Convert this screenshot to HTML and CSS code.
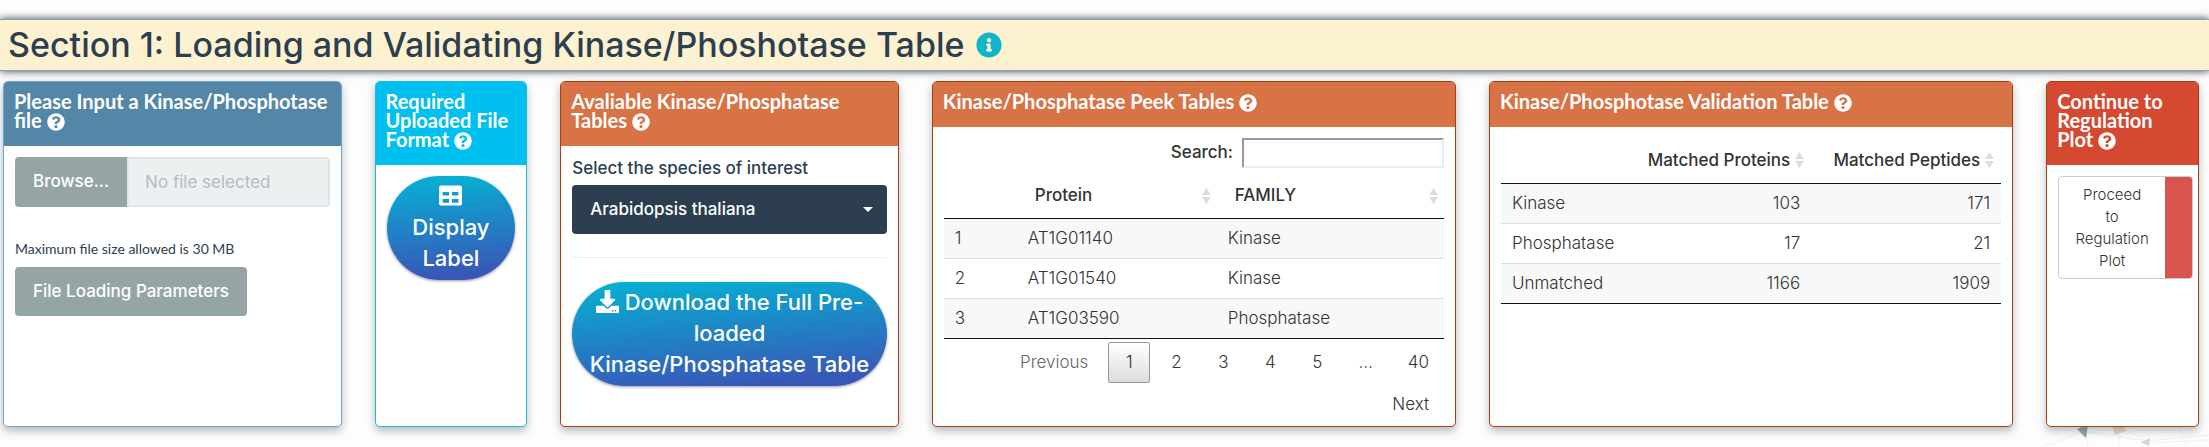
FILE: index.html
```html
<!DOCTYPE html>
<html lang="en">
<head>
<meta charset="utf-8">
<meta name="viewport" content="width=device-width, initial-scale=1">
<title>Loading and Validating</title>
<link rel="stylesheet" href="styles.css">
</head>
<body>
<svg class="defs" aria-hidden="true">
  <symbol id="question" viewBox="0 0 512 512"><path d="M504 256c0 136.997-111.043 248-248 248S8 392.997 8 256C8 119.083 119.043 8 256 8s248 111.083 248 248zM262.655 90c-54.497 0-89.255 22.957-116.549 63.758-3.536 5.286-2.353 12.415 2.715 16.258l34.699 26.31c5.205 3.947 12.621 3.008 16.665-2.122 17.864-22.658 30.113-35.797 57.303-35.797 20.429 0 45.698 13.148 45.698 32.958 0 14.976-12.363 22.667-32.534 33.976C247.128 238.528 216 254.941 216 296v4c0 6.627 5.373 12 12 12h56c6.627 0 12-5.373 12-12v-1.333c0-28.462 83.186-29.647 83.186-106.667 0-58.002-60.165-102-116.531-102zM256 338c-25.365 0-46 20.635-46 46 0 25.364 20.635 46 46 46s46-20.636 46-46c0-25.365-20.635-46-46-46z"/></symbol>
  <symbol id="info" viewBox="0 0 512 512"><path d="M256 8C119.043 8 8 119.083 8 256c0 136.997 111.043 248 248 248s248-111.003 248-248C504 119.083 392.957 8 256 8zm0 110c23.196 0 42 18.804 42 42s-18.804 42-42 42-42-18.804-42-42 18.804-42 42-42zm56 254c0 6.627-5.373 12-12 12h-88c-6.627 0-12-5.373-12-12v-24c0-6.627 5.373-12 12-12h12v-64h-12c-6.627 0-12-5.373-12-12v-24c0-6.627 5.373-12 12-12h64c6.627 0 12 5.373 12 12v100h12c6.627 0 12 5.373 12 12v24z"/></symbol>
  <symbol id="sort" viewBox="0 0 9 16"><path d="M4.500 0L9 7H0zM0 9h9l-4.500 7z"/></symbol>
</svg>

<header class="section-title">
  <h1>Section 1: Loading and Validating Kinase/Phoshotase Table</h1>
  <svg class="info-icon" role="img" aria-label="Info"><use href="#info"/></svg>
</header>

<main class="cards">
  <section class="card span-2 blue">
    <h2 class="card-head">Please Input a Kinase/Phosphotase file <svg class="help"><use href="#question"/></svg></h2>
    <div class="card-body">
      <div class="file-group">
        <button class="btn browse" type="button">Browse...</button>
        <input class="file-name" type="text" placeholder="No file selected" aria-label="Selected file" readonly>
      </div>
      <p class="note">Maximum file size allowed is 30 MB</p>
      <button class="btn params" type="button">File Loading Parameters</button>
    </div>
  </section>

  <section class="card cyan">
    <h2 class="card-head">Required Uploaded File Format <svg class="help"><use href="#question"/></svg></h2>
    <div class="card-body">
      <button class="pill" type="button"><svg class="pill-icon" viewBox="0 0 512 512"><path d="M464 32H48C21.490 32 0 53.490 0 80v352c0 26.510 21.490 48 48 48h416c26.510 0 48-21.490 48-48V80c0-26.510-21.490-48-48-48zM224 416H80v-80h144v80zm0-160H80v-80h144v80zm208 160H288v-80h144v80zm0-160H288v-80h144v80z"/></svg> Display Label</button>
    </div>
  </section>

  <section class="card span-2 orange">
    <h2 class="card-head">Avaliable Kinase/Phosphatase Tables <svg class="help"><use href="#question"/></svg></h2>
    <div class="card-body">
      <label class="field-label" for="species">Select the species of interest</label>
      <div class="select-wrap">
        <select id="species"><option>Arabidopsis thaliana</option></select>
        <svg class="caret" viewBox="0 0 10 5"><path d="M0 0h10L5 5z"/></svg>
      </div>
      <hr>
      <button class="pill" type="button"><svg class="pill-icon" viewBox="0 0 512 512"><path d="M216 0h80c13.300 0 24 10.700 24 24v168h87.700c17.800 0 26.700 21.500 14.100 34.100L269.700 378.300c-7.500 7.500-19.800 7.500-27.300 0L90.100 226.100c-12.600-12.600-3.700-34.100 14.100-34.100H192V24c0-13.300 10.700-24 24-24zm296 376v112c0 13.300-10.700 24-24 24H24c-13.300 0-24-10.700-24-24V376c0-13.300 10.700-24 24-24h146.700l49 49c20.100 20.100 52.500 20.100 72.600 0l49-49H488c13.300 0 24 10.700 24 24zm-124 88c0-11-9-20-20-20s-20 9-20 20 9 20 20 20 20-9 20-20zm64 0c0-11-9-20-20-20s-20 9-20 20 9 20 20 20 20-9 20-20z"/></svg> Download the Full Pre-loaded Kinase/Phosphatase Table</button>
    </div>
  </section>

  <section class="card span-3 orange">
    <h2 class="card-head">Kinase/Phosphatase Peek Tables <svg class="help"><use href="#question"/></svg></h2>
    <div class="card-body">
      <div class="search">
        <label for="search">Search:</label>
        <input id="search" type="search">
      </div>
      <table class="data peek">
        <colgroup><col class="c-index"><col class="c-protein"><col></colgroup>
        <thead><tr><th></th><th><span class="th">Protein <svg class="sort"><use href="#sort"/></svg></span></th><th><span class="th">FAMILY <svg class="sort"><use href="#sort"/></svg></span></th></tr></thead>
        <tbody>
          <tr><td>1</td><td>AT1G01140</td><td>Kinase</td></tr>
          <tr><td>2</td><td>AT1G01540</td><td>Kinase</td></tr>
          <tr><td>3</td><td>AT1G03590</td><td>Phosphatase</td></tr>
        </tbody>
      </table>
      <nav class="pages" aria-label="Table pages">
        <button class="page muted" type="button">Previous</button>
        <button class="page current" type="button">1</button>
        <button class="page" type="button">2</button>
        <button class="page" type="button">3</button>
        <button class="page" type="button">4</button>
        <button class="page" type="button">5</button>
        <span class="page">…</span>
        <button class="page" type="button">40</button>
        <button class="page" type="button">Next</button>
      </nav>
    </div>
  </section>

  <section class="card span-3 orange">
    <h2 class="card-head">Kinase/Phosphotase Validation Table <svg class="help"><use href="#question"/></svg></h2>
    <div class="card-body">
      <table class="data validation">
        <colgroup><col><col class="c-proteins"><col class="c-peptides"></colgroup>
        <thead><tr><th></th><th><span class="th">Matched Proteins <svg class="sort"><use href="#sort"/></svg></span></th><th><span class="th">Matched Peptides <svg class="sort"><use href="#sort"/></svg></span></th></tr></thead>
        <tbody>
          <tr><td>Kinase</td><td>103</td><td>171</td></tr>
          <tr><td>Phosphatase</td><td>17</td><td>21</td></tr>
          <tr><td>Unmatched</td><td>1166</td><td>1909</td></tr>
        </tbody>
      </table>
    </div>
  </section>

  <section class="card red">
    <h2 class="card-head">Continue to Regulation Plot <svg class="help"><use href="#question"/></svg></h2>
    <div class="card-body">
      <button class="proceed" type="button"><span class="proceed-text">Proceed<br>to<br>Regulation<br>Plot</span><span class="proceed-bar"></span></button>
    </div>
  </section>
</main>

<svg class="network" viewBox="0 0 170 22" aria-hidden="true">
  <path class="line" d="M2 22L44 7M47 8l2 14M48 7l60 9 62-6M80 8v14M86 4l24 14M140 0l8 22M110 18l60-3"/>
  <path class="teal" d="M38 4l11-4-2 13z"/>
  <path class="sand" d="M73 0h11l3 6-11 4z"/>
  <path class="grey" d="M102 17l9-4-1 8z"/>
</svg>
</body>
</html>
```

FILE: styles.css
```css
*, *::before, *::after { box-sizing: border-box; }

body {
  position: relative;
  margin: 0;
  min-height: 100vh;
  padding-top: 19px;
  overflow-x: hidden;
  background: #fdfdfd;
  color: #2c3e50;
  font-family: Inter, "Liberation Sans", sans-serif;
  font-size: 17px;
  line-height: 1.5;
}

button, input, select { font: inherit; }
button { cursor: pointer; }
svg { fill: currentColor; }
.defs { position: absolute; width: 0; height: 0; }

.section-title {
  display: flex;
  align-items: center;
  gap: 12px;
  height: 52px;
  padding: 0 8px;
  background: #fdf2d0;
  border: solid #95a0ab;
  border-width: 1px 0;
  box-shadow: 0 0 8px #2c3e50;
}
.section-title h1 { margin: 0; font-size: 34px; font-weight: 500; line-height: 40px; }
.info-icon { width: 26px; height: 26px; color: #0fb5c9; }

.cards {
  position: relative;
  z-index: 1;
  display: grid;
  grid-template-columns: repeat(12, minmax(0, 1fr));
  gap: 33px;
  padding: 10px 10px 0 3px;
}
.card {
  min-height: 346px;
  overflow: hidden;
  background: #fff;
  border: 1px solid;
  border-radius: 5px;
  box-shadow: 0 4px 8px rgba(44, 62, 80, 0.35);
}
.span-2 { grid-column: span 2; }
.span-3 { grid-column: span 3; }
.card-head {
  margin: 0;
  padding: 10px 10px 15px;
  color: #fff;
  font: 700 20px/19px Lato, sans-serif;
}
.help { width: 18px; height: 18px; vertical-align: -3px; }
.card-body { padding: 11px 11px 0; }

.blue { border-color: #6ca7cc; }
.blue .card-head { background: #5487a7; }
.cyan { border-color: #1fbbdd; }
.cyan .card-head { background: #00c0ef; }
.orange { border-color: #a8400c; }
.orange .card-head { background: #d87346; }
.red { border-color: #a8400c; }
.red .card-head { background: #d44930; }

.file-group { display: flex; }
.btn {
  height: 49px;
  padding: 0 18px;
  background: #95a5a6;
  border: 0;
  border-radius: 4px;
  color: #fff;
  font-weight: 500;
  white-space: nowrap;
}
.browse { height: 50px; border-radius: 4px 0 0 4px; }
.file-name {
  flex: 1;
  min-width: 0;
  height: 50px;
  padding: 0 16px;
  background: #ecf0f1;
  border: 2px solid #dce4ec;
  border-radius: 0 4px 4px 0;
}
.file-name::placeholder { color: #b4bcc2; opacity: 1; }
.note { margin: 31px 0 7px; font: 14px/22px Lato, sans-serif; }

.pill {
  display: block;
  width: 100%;
  padding: 5px 14px 6px;
  border: 0;
  border-radius: 52px;
  background: linear-gradient(175deg, #04b4d4, #3858b8 90%);
  box-shadow: 0 1px 3px rgba(0, 0, 0, 0.4);
  color: #fff;
  font-size: 22px;
  font-weight: 500;
  line-height: 31px;
}
.pill-icon { width: 23px; height: 23px; vertical-align: -3px; }

.field-label { display: block; margin-bottom: 5px; font-weight: 500; line-height: 23px; }
.select-wrap { display: grid; align-items: center; }
.select-wrap > * { grid-area: 1 / 1; }
.select-wrap select {
  width: 100%;
  height: 49px;
  padding: 0 18px;
  appearance: none;
  background: #2c3e50;
  border: 0;
  border-radius: 4px;
  color: #fff;
  font-weight: 500;
}
.caret { width: 10px; height: 5px; margin-right: 14px; justify-self: end; color: #fff; pointer-events: none; }
hr { height: 1px; margin: 23px 0 24px; background: #ecf0f1; border: 0; }

.search {
  display: flex;
  justify-content: flex-end;
  align-items: center;
  gap: 9px;
  color: #333;
  font-weight: 500;
}
.search input {
  width: 202px;
  height: 30px;
  background: #fff;
  border: 2px solid;
  border-color: #96999b #ededed #ededed #96999b;
  border-radius: 0;
  appearance: none;
}

.data { width: 100%; table-layout: fixed; border-collapse: collapse; border-bottom: 1px solid #111; color: #333; }
.data thead { border-bottom: 1px solid #111; }
.data th { height: 50px; padding: 6px 6px 0 18px; text-align: left; font-weight: 500; white-space: nowrap; }
.th { display: flex; align-items: center; justify-content: space-between; gap: 5px; }
.sort { flex: none; width: 9px; height: 16px; color: #ddd; }
.data td { height: 40px; padding: 2px 11px 0; font-weight: 300; }
.data tbody tr + tr { border-top: 1px solid #ddd; }
.data tbody tr:nth-child(odd) { background: #f8f8f8; }
.c-index { width: 73px; }
.c-protein { width: 200px; }
.c-proteins { width: 181px; }
.c-peptides { width: 190px; }
.validation { margin-top: 4px; }
.validation th { height: 41px; padding: 0 7px 4px 0; }
.validation th .th { justify-content: flex-end; }
.validation td + td { text-align: right; }

.pages { display: flex; flex-wrap: wrap; justify-content: flex-end; gap: 1px 5px; padding-top: 3px; }
.page {
  min-width: 42px;
  height: 41px;
  padding: 0 14px;
  border: 1px solid transparent;
  border-radius: 2px;
  background: none;
  color: #333;
  font-weight: 300;
  line-height: 39px;
  text-align: center;
}
.page.muted { color: #666; }
.page.current { border-color: #979797; background: linear-gradient(#fff, #dcdcdc); }

.proceed {
  display: flex;
  width: calc(100% + 6px);
  padding: 0;
  overflow: hidden;
  background: #fff;
  border: 1px solid #ccc;
  border-radius: 4px;
  color: #333;
  font-size: 15px;
  font-weight: 300;
  line-height: 22px;
}
.proceed-text { flex: 1; padding: 7px 12px 6px; }
.proceed-bar { align-self: stretch; width: 27px; background: #d9534f; }

.network { position: absolute; right: 0; bottom: 0; width: 170px; height: 22px; }
.line { fill: none; stroke: #f1f1f1; }
.teal { fill: #94a6a6; }
.sand { fill: #f5d5bb; }
.grey { fill: #d6d6d6; }
```
